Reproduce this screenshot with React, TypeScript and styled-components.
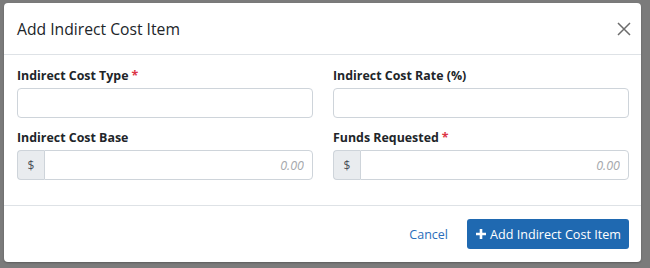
import React from 'react'
import styled, { createGlobalStyle } from 'styled-components'

const GlobalStyle = createGlobalStyle`
  html, body {
    margin: 0;
    padding: 0;
  }
  body {
    font-family: 'Open Sans', 'Noto Sans', sans-serif;
    background: #7b7b7b;
  }
`

const Backdrop = styled.div`
  width: 650px;
  height: 268px;
  background: #7b7b7b;
  padding: 3px 9px 6px 4px;
  box-sizing: border-box;
  overflow: hidden;
`

const Modal = styled.div`
  width: 637px;
  height: 259px;
  background: #fff;
  border-radius: 4px;
  display: flex;
  flex-direction: column;
  box-shadow: 0 1px 2px rgba(0, 0, 0, 0.25);
`

const Header = styled.div`
  height: 50px;
  display: flex;
  align-items: center;
  justify-content: space-between;
  padding: 1px 8px 0 13px;
  border-bottom: 1px solid #dee2e6;
`

const Title = styled.h5`
  margin: 0;
  font-size: 15.7px;
  font-weight: 400;
  color: #212529;
`

const Close = styled.button`
  border: 0;
  background: none;
  padding: 0;
  width: 18px;
  height: 18px;
  display: flex;
  align-items: center;
  justify-content: center;
  cursor: pointer;
`

const Body = styled.div`
  flex: 1;
  padding: 12px 12px 0 13px;
  display: grid;
  grid-template-columns: 1fr 1fr;
  column-gap: 20px;
  row-gap: 11px;
  align-content: start;
`

const Field = styled.div`
  display: flex;
  flex-direction: column;
`

const Label = styled.label`
  font-size: 12.4px;
  font-weight: 700;
  color: #212529;
  line-height: 18px;
  margin-bottom: 3px;
`

const Required = styled.span`
  color: #dc3545;
  margin-left: 3px;
`

const Input = styled.input`
  height: 30px;
  box-sizing: border-box;
  border: 1px solid #ced4da;
  border-radius: 4px;
  padding: 0 8px;
  font-family: inherit;
  font-size: 12.5px;
  min-width: 0;

  &::placeholder {
    color: #a6a9ad;
    font-style: italic;
  }
`

const Group = styled.div`
  display: flex;
  height: 30px;
`

const Addon = styled.span`
  width: 27px;
  box-sizing: border-box;
  display: flex;
  align-items: center;
  justify-content: center;
  background: #e9ecef;
  border: 1px solid #ced4da;
  border-right: 0;
  border-radius: 4px 0 0 4px;
  font-size: 12px;
  color: #495057;
`

const MoneyInput = styled(Input)`
  flex: 1;
  text-align: right;
  border-radius: 0 4px 4px 0;
`

const Footer = styled.div`
  height: 56px;
  border-top: 1px solid #dee2e6;
  display: flex;
  align-items: center;
  justify-content: flex-end;
  padding: 0 12px;
  gap: 19px;
`

const LinkButton = styled.button`
  border: 0;
  background: none;
  padding: 0;
  font-family: inherit;
  font-size: 12.5px;
  color: #2a6ebb;
  cursor: pointer;
`

const Primary = styled.button`
  height: 30px;
  width: 162px;
  border: 0;
  border-radius: 3px;
  background: #1f69b1;
  color: #fff;
  font-family: inherit;
  font-size: 12.6px;
  display: flex;
  align-items: center;
  justify-content: center;
  gap: 3px;
  cursor: pointer;
`

const CloseIcon = () => (
  <svg width="16" height="16" viewBox="0 0 16 16">
    <path d="M2 2L14 14M14 2L2 14" stroke="#6c6c6c" strokeWidth="1.5" />
  </svg>
)

const PlusIcon = () => (
  <svg width="12" height="12" viewBox="0 0 12 12">
    <path d="M6 1V11M1 6H11" stroke="#fff" strokeWidth="2.6" />
  </svg>
)

export default function App() {
  return (
    <>
      <GlobalStyle />
      <Backdrop>
        <Modal>
          <Header>
            <Title>Add Indirect Cost Item</Title>
            <Close aria-label="Close">
              <CloseIcon />
            </Close>
          </Header>
          <Body>
            <Field>
              <Label>
                Indirect Cost Type<Required>*</Required>
              </Label>
              <Input />
            </Field>
            <Field>
              <Label>Indirect Cost Rate (%)</Label>
              <Input />
            </Field>
            <Field>
              <Label>Indirect Cost Base</Label>
              <Group>
                <Addon>$</Addon>
                <MoneyInput placeholder="0.00" />
              </Group>
            </Field>
            <Field>
              <Label>
                Funds Requested<Required>*</Required>
              </Label>
              <Group>
                <Addon>$</Addon>
                <MoneyInput placeholder="0.00" />
              </Group>
            </Field>
          </Body>
          <Footer>
            <LinkButton>Cancel</LinkButton>
            <Primary>
              <PlusIcon />
              Add Indirect Cost Item
            </Primary>
          </Footer>
        </Modal>
      </Backdrop>
    </>
  )
}
